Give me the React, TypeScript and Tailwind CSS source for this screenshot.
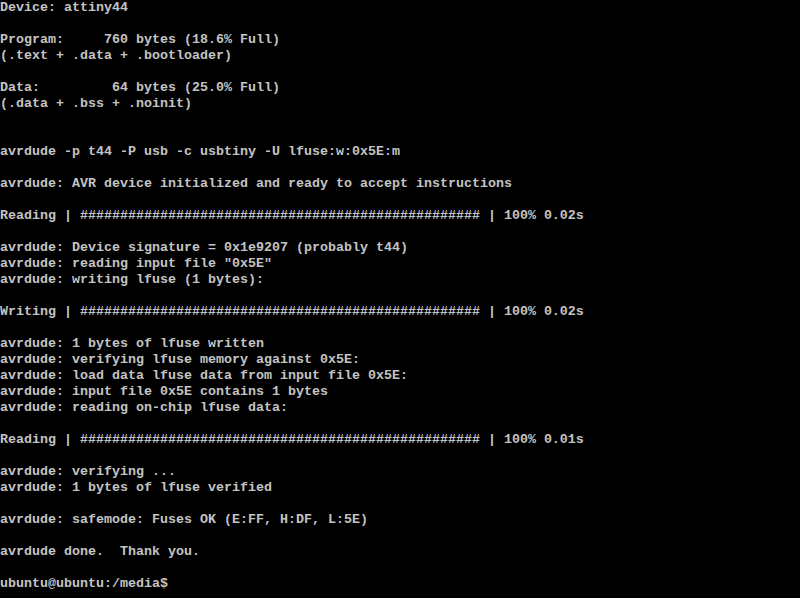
const bar = "#".repeat(50);

const lines = [
  "Device: attiny44",
  "",
  "Program:     760 bytes (18.6% Full)",
  "(.text + .data + .bootloader)",
  "",
  "Data:         64 bytes (25.0% Full)",
  "(.data + .bss + .noinit)",
  "",
  "",
  "avrdude -p t44 -P usb -c usbtiny -U lfuse:w:0x5E:m",
  "",
  "avrdude: AVR device initialized and ready to accept instructions",
  "",
  `Reading | ${bar} | 100% 0.02s`,
  "",
  "avrdude: Device signature = 0x1e9207 (probably t44)",
  'avrdude: reading input file "0x5E"',
  "avrdude: writing lfuse (1 bytes):",
  "",
  `Writing | ${bar} | 100% 0.02s`,
  "",
  "avrdude: 1 bytes of lfuse written",
  "avrdude: verifying lfuse memory against 0x5E:",
  "avrdude: load data lfuse data from input file 0x5E:",
  "avrdude: input file 0x5E contains 1 bytes",
  "avrdude: reading on-chip lfuse data:",
  "",
  `Reading | ${bar} | 100% 0.01s`,
  "",
  "avrdude: verifying ...",
  "avrdude: 1 bytes of lfuse verified",
  "",
  "avrdude: safemode: Fuses OK (E:FF, H:DF, L:5E)",
  "",
  "avrdude done.  Thank you.",
  "",
  "ubuntu@ubuntu:/media$",
];

export default function App() {
  return (
    <div className="w-[800px] h-[598px] bg-black overflow-hidden">
      {/* console text, 8x16 cells */}
      <div className="font-['Liberation_Mono',monospace] font-bold text-[13.3333px] leading-[16px] text-[#c4c4c4] whitespace-pre">
        {lines.map((l, i) => (
          <div key={i} className="h-[16px]">
            {l}
          </div>
        ))}
      </div>
    </div>
  );
}
